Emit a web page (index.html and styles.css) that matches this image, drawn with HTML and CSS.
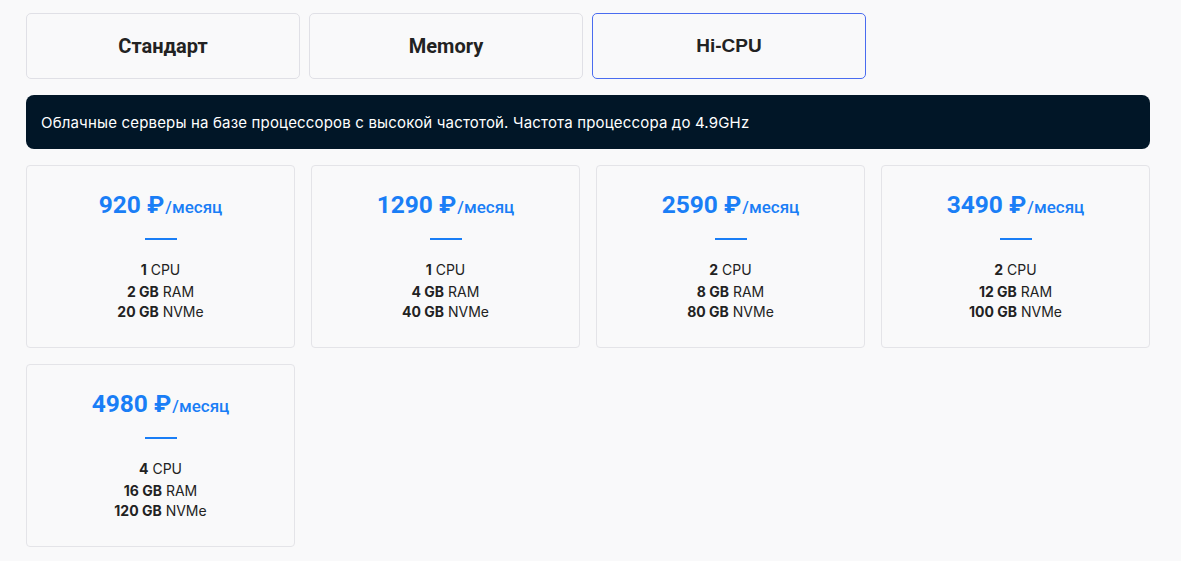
FILE: index.html
```html
<!DOCTYPE html>
<html lang="ru">
<head>
<meta charset="utf-8">
<title>Тарифы</title>
<link rel="stylesheet" href="styles.css">
</head>
<body>
<div class="wrap">
  <div class="tabs">
    <div class="tab">Стандарт</div>
    <div class="tab">Memory</div>
    <div class="tab tab-active">Hi-CPU</div>
  </div>
  <div class="banner">Облачные серверы на базе процессоров с высокой частотой. Частота процессора до 4.9GHz</div>
  <div class="grid">
    <div class="card">
      <div class="price"><b>920 ₽</b><span>/месяц</span></div>
      <div class="rule"></div>
      <div class="specs"><div><b>1</b> CPU</div><div><b>2 GB</b> RAM</div><div><b>20 GB</b> NVMe</div></div>
    </div>
    <div class="card">
      <div class="price"><b>1290 ₽</b><span>/месяц</span></div>
      <div class="rule"></div>
      <div class="specs"><div><b>1</b> CPU</div><div><b>4 GB</b> RAM</div><div><b>40 GB</b> NVMe</div></div>
    </div>
    <div class="card">
      <div class="price"><b>2590 ₽</b><span>/месяц</span></div>
      <div class="rule"></div>
      <div class="specs"><div><b>2</b> CPU</div><div><b>8 GB</b> RAM</div><div><b>80 GB</b> NVMe</div></div>
    </div>
    <div class="card">
      <div class="price"><b>3490 ₽</b><span>/месяц</span></div>
      <div class="rule"></div>
      <div class="specs"><div><b>2</b> CPU</div><div><b>12 GB</b> RAM</div><div><b>100 GB</b> NVMe</div></div>
    </div>
    <div class="card">
      <div class="price"><b>4980 ₽</b><span>/месяц</span></div>
      <div class="rule"></div>
      <div class="specs"><div><b>4</b> CPU</div><div><b>16 GB</b> RAM</div><div><b>120 GB</b> NVMe</div></div>
    </div>
  </div>
</div>
</body>
</html>
```
FILE: styles.css
```css
* { box-sizing: border-box; }
html, body { margin: 0; padding: 0; background: #f9f9fa; }
body { font-family: Roboto, "Noto Sans", sans-serif; color: #222; }
.wrap { width: 1124px; margin-left: 26px; padding-top: 13px; }
.tabs { display: flex; gap: 9px; }
.tab {
  width: 274px; height: 66px;
  display: flex; align-items: center; justify-content: center;
  border: 1px solid #e0e0e6; border-radius: 5px;
  font-size: 20px; font-weight: 700; color: #222;
}
.tab-active { border-color: #4a6cf0; font-family: "Liberation Sans", Arial, sans-serif; font-size: 19px; }
.banner {
  margin-top: 16px; height: 54px; border-radius: 8px;
  background: #011627; color: #fff;
  display: flex; align-items: center; padding-left: 15px;
  font-family: Inter, sans-serif; font-size: 15px; letter-spacing: 0.17px;
}
.grid { margin-top: 16px; display: grid; grid-template-columns: repeat(4, 269px); column-gap: 16px; row-gap: 16px; }
.card {
  height: 183px; border: 1px solid #e4e4e8; border-radius: 4px;
  display: flex; flex-direction: column; align-items: center;
  padding-top: 24px;
}
.price { color: #1a7ef6; line-height: 30px; white-space: nowrap; }
.price b { font-size: 24.5px; font-weight: 700; }
.price span { font-size: 17px; font-weight: 500; margin-left: 1px; }
.rule { width: 32px; height: 2px; background: #1a7ef6; margin-top: 15px; }
.specs { margin-top: 19px; text-align: center; font-family: Inter, Roboto, sans-serif; font-size: 14px; line-height: 21px; color: #222; }
.specs div:first-child { line-height: 22px; }
.specs div:nth-child(3) { line-height: 19px; }
.specs b { font-weight: 700; }
```
